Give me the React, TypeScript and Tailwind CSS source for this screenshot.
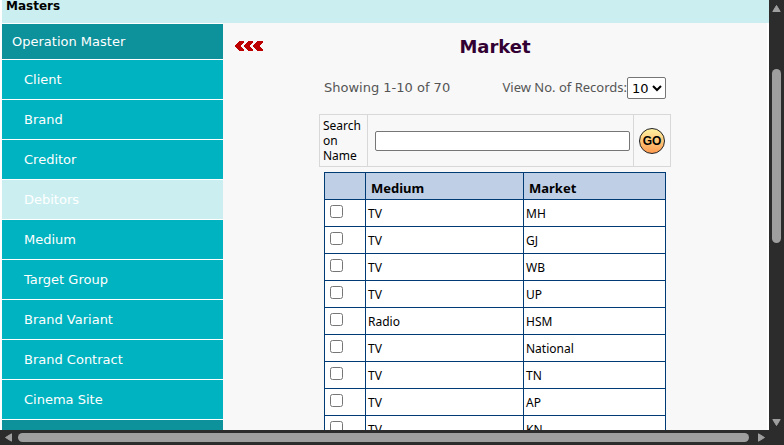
const menu = [
  'Client',
  'Brand',
  'Creditor',
  'Debitors',
  'Medium',
  'Target Group',
  'Brand Variant',
  'Brand Contract',
  'Cinema Site',
];

const rows = [
  ['TV', 'MH'],
  ['TV', 'GJ'],
  ['TV', 'WB'],
  ['TV', 'UP'],
  ['Radio', 'HSM'],
  ['TV', 'National'],
  ['TV', 'TN'],
  ['TV', 'AP'],
  ['TV', 'KN'],
];

function Sidebar() {
  return (
    <nav className="w-[221px] shrink-0 pt-px text-[13px] text-white">
      <h2 className="mb-px h-[35px] bg-[#0d919b] px-[10px] leading-[35px]">Operation Master</h2>
      <ul>
        {menu.map((name) => (
          <li key={name} className="mb-px">
            <a
              href="#"
              className={`block h-[39px] px-[22px] leading-[39px] ${name === 'Debitors' ? 'bg-[#cbeff1]' : 'bg-[#00b3c0]'}`}
            >
              {name}
            </a>
          </li>
        ))}
      </ul>
      <div className="h-[35px] bg-[#0d919b]" />
    </nav>
  );
}

function BackArrows() {
  return (
    <svg width="28" height="10" viewBox="0 0 28 10" fill="#bd0000" shapeRendering="crispEdges" aria-hidden="true">
      <path d="M0 5V4L4 0H9V1L6 4V6L9 9V10H4L0 6Z" />
      <path d="M9 5V4L13 0H18V1L15 4V6L18 9V10H13L9 6Z" />
      <path d="M18 5V4L22 0H28V1L25 4V6L28 9V10H22L18 6Z" />
    </svg>
  );
}

function SearchBar() {
  return (
    <form
      className="mt-[15px] flex w-[352px] items-stretch border border-[#d8d8d8] font-['Noto_Sans',sans-serif] text-[12px]"
      onSubmit={(e) => e.preventDefault()}
    >
      <label htmlFor="search" className="w-[48px] border-r border-[#d8d8d8] px-[3px] py-[3px] leading-[15px] text-black">
        Search on Name
      </label>
      <div className="flex flex-1 items-center pl-[7px] pr-[3px]">
        <input id="search" type="text" className="h-[20px] w-full rounded-[2px] border border-[#767676] bg-white px-1" />
      </div>
      <div className="flex w-[37px] items-center justify-center border-l border-[#d8d8d8]">
        <button
          type="submit"
          className="flex size-[26px] items-center justify-center rounded-full border border-[#222] bg-linear-to-b from-[#fff2a0] to-[#ff9a50] font-['Liberation_Sans',sans-serif] text-[12px] font-bold text-black"
        >
          GO
        </button>
      </div>
    </form>
  );
}

function MarketTable() {
  return (
    <table className="mt-[5px] w-[342px] table-fixed border-collapse border border-[#003b75] bg-white font-['Noto_Sans',sans-serif] text-[12px] leading-[16px] text-black">
      <colgroup>
        <col className="w-[41px]" />
        <col className="w-[158px]" />
        <col />
      </colgroup>
      <thead>
        <tr className="h-[27px] bg-[#bfcfe6] text-left text-[13px]">
          <th className="border border-[#003b75]" />
          <th className="border border-[#003b75] px-[5px] pt-[4px] pb-0">Medium</th>
          <th className="border border-[#003b75] px-[5px] pt-[4px] pb-0">Market</th>
        </tr>
      </thead>
      <tbody>
        {rows.map(([medium, market]) => (
          <tr key={market} className="h-[27px]">
            <td className="border border-[#003b75] px-[5px] align-top">
              <input type="checkbox" aria-label={market} className="mt-[5px] block size-[13px]" />
            </td>
            <td className="border border-[#003b75] px-[2px] pt-[2px]">{medium}</td>
            <td className="border border-[#003b75] px-[2px] pt-[2px]">{market}</td>
          </tr>
        ))}
      </tbody>
    </table>
  );
}

function Arrow({ className }: { className: string }) {
  return (
    <svg width="9" height="9" viewBox="0 0 9 9" className={className} aria-hidden="true">
      <path d="M4.5 1.5 8.2 7.5H0.8Z" fill="#9f9f9f" stroke="#9f9f9f" strokeLinejoin="round" />
    </svg>
  );
}

export default function App() {
  return (
    <div className="flex h-screen flex-col overflow-hidden bg-[#2c2c2c] font-['DejaVu_Sans',sans-serif]">
      <div className="flex min-h-0 flex-1">
        <div className="flex-1 overflow-hidden bg-white pl-[2px]">
          <header className="h-[23px] bg-[#cbeff1] px-1 text-[12px] leading-[12px] font-bold text-black">Masters</header>
          <div className="flex pr-[2px]">
            <Sidebar />
            <main className="grid flex-1 grid-cols-[1fr_auto_1fr] items-start bg-[#f8f8f8]">
              <a href="#" aria-label="Back" className="ml-[12px] mt-[18px] justify-self-start">
                <BackArrows />
              </a>
              <div className="flex flex-col items-center">
                <h1 className="mt-[12px] text-[18px] leading-[24px] font-bold text-[#330033]">Market</h1>
                <div className="mt-[18px] flex w-[342px] items-center justify-between text-[#555]">
                  <p className="text-[13px]">Showing 1-10 of 70</p>
                  <div className="flex items-center">
                    <label htmlFor="count" className="font-['Noto_Sans',sans-serif] text-[13px]">
                      View No. of Records:
                    </label>
                    <select
                      id="count"
                      defaultValue="10"
                      className="h-[22px] w-[39px] rounded-[2px] border border-[#767676] bg-white text-[13px] text-black"
                    >
                      <option>10</option>
                      <option>20</option>
                      <option>50</option>
                    </select>
                  </div>
                </div>
                <SearchBar />
                <MarketTable />
              </div>
            </main>
          </div>
        </div>
        <div className="flex w-[15px] shrink-0 flex-col items-center pt-1 pb-[3px]">
          <Arrow className="" />
          <div className="mt-[56px] h-[174px] w-[9px] rounded-full bg-[#9f9f9f]" />
          <Arrow className="mt-auto rotate-180" />
        </div>
      </div>
      <div className="flex h-[15px] shrink-0 items-center pl-[4px] pr-[18px]">
        <Arrow className="-rotate-90" />
        <div className="ml-[5px] mr-[8px] h-[9px] flex-1 rounded-full bg-[#9f9f9f]" />
        <Arrow className="rotate-90" />
      </div>
    </div>
  );
}
